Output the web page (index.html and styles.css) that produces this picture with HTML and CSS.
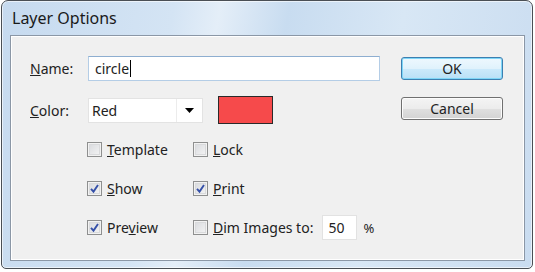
FILE: index.html
```html
<!DOCTYPE html>
<html>
<head>
<meta charset="utf-8">
<link rel="stylesheet" href="styles.css">
</head>
<body>
<div class="window">
  <div class="titlebar">Layer Options</div>
  <div class="panel">
    <div class="form">
      <div class="row row-name">
        <span class="label"><u>N</u>ame:</span>
        <div class="textbox name-box">circle<span class="caret"></span></div>
      </div>
      <div class="row row-color">
        <span class="label"><u>C</u>olor:</span>
        <div class="select">
          <span class="select-text">Red</span>
          <span class="select-arrow"><svg width="9" height="5" viewBox="0 0 9 5"><path d="M0 0H9L4.5 5Z" fill="#000"/></svg></span>
        </div>
        <div class="swatch"></div>
      </div>
      <div class="checks">
        <label class="check"><span class="box"></span><span><u>T</u>emplate</span></label>
        <label class="check"><span class="box"></span><span><u>L</u>ock</span></label>
        <label class="check"><span class="box checked"><svg width="11" height="11" viewBox="0 0 11 11"><path d="M2 5.8L4.5 8.6L9 2" fill="none" stroke="#3550a8" stroke-width="1.9"/></svg></span><span><u>S</u>how</span></label>
        <label class="check"><span class="box checked"><svg width="11" height="11" viewBox="0 0 11 11"><path d="M2 5.8L4.5 8.6L9 2" fill="none" stroke="#3550a8" stroke-width="1.9"/></svg></span><span><u>P</u>rint</span></label>
        <label class="check"><span class="box checked"><svg width="11" height="11" viewBox="0 0 11 11"><path d="M2 5.8L4.5 8.6L9 2" fill="none" stroke="#3550a8" stroke-width="1.9"/></svg></span><span>Pre<u>v</u>iew</span></label>
        <div class="check dim">
          <span class="box"></span><span><u>D</u>im Images to:</span>
          <div class="textbox pct-box">50</div>
          <span class="pct">%</span>
        </div>
      </div>
    </div>
    <div class="buttons">
      <div class="btn btn-default">OK</div>
      <div class="btn">Cancel</div>
    </div>
  </div>
</div>
</body>
</html>
```

FILE: styles.css
```css
html, body {
  margin: 0;
  padding: 0;
  background: #ffffff;
}

body {
  font-family: "Noto Sans", "Open Sans", sans-serif;
  color: #222222;
}

.window {
  width: 532px;
  height: 269px;
  margin-left: 1px;
  border: 1px solid #4a4f55;
  border-radius: 7px 7px 5px 5px;
  background: linear-gradient(100deg, #c6daef 0%, #d4e4f4 30%, #e4eef8 38%, #c8dcf0 50%, #d8e7f5 70%, #c9dcf0 100%);
  display: flex;
  flex-direction: column;
  box-sizing: border-box;
  box-shadow: inset 0 0 0 1px rgba(255,255,255,0.6);
}

.titlebar {
  height: 34px;
  padding-left: 10px;
  display: flex;
  align-items: center;
  font-size: 16px;
  color: #1a1a1a;
  flex-shrink: 0;
}

.panel {
  margin: 0 7px 7px 8px;
  flex: 1;
  border: 1px solid #8b97a6;
  background: #f0f0f0;
  box-shadow: inset 0 0 0 1px #ffffff;
  display: flex;
  justify-content: space-between;
  padding: 20px 21px 0 19px;
}

.form {
  display: flex;
  flex-direction: column;
}

.row {
  display: flex;
  align-items: center;
}

.label {
  width: 58px;
  font-size: 14px;
}

.row-name {
  height: 25px;
}

.textbox {
  background: #ffffff;
  border: 1px solid #abadb3;
  box-sizing: border-box;
  font-size: 14px;
  display: flex;
  align-items: center;
}

.name-box {
  width: 292px;
  height: 25px;
  padding-left: 6px;
  border-color: #b4cde6;
  border-top-color: #8eaed0;
}

.caret {
  display: inline-block;
  width: 1px;
  height: 17px;
  background: #000;
  margin-left: 1px;
}

.row-color {
  height: 28px;
  margin-top: 15px;
}

.select {
  width: 115px;
  height: 25px;
  display: flex;
  background: #ffffff;
  box-sizing: border-box;
  border: 1px solid #e3e3e3;
  font-size: 14px;
}

.select-text {
  flex: 1;
  display: flex;
  align-items: center;
  padding-left: 3px;
  border-right: 1px solid #ececec;
}

.select-arrow {
  width: 25px;
  display: flex;
  align-items: center;
  justify-content: center;
}

.swatch {
  width: 55px;
  height: 28px;
  margin-left: 15px;
  box-sizing: border-box;
  border: 1px solid #2a2a2a;
  background: #f64a4b;
}

.checks {
  margin-top: 13px;
  margin-left: 57px;
  display: grid;
  grid-template-columns: 106px auto;
  grid-auto-rows: 25px;
  row-gap: 14px;
}

.check {
  display: flex;
  align-items: center;
  font-size: 14px;
  white-space: nowrap;
}

.box {
  width: 15px;
  height: 15px;
  box-sizing: border-box;
  border: 1px solid #8e8f8f;
  background: linear-gradient(135deg, #d6d8dc, #f6f6f6);
  box-shadow: inset 0 0 0 1px #f2f2f2, inset 0 0 0 2px #d9dadc;
  margin-right: 5px;
  display: flex;
  align-items: center;
  justify-content: center;
}

.pct-box {
  width: 35px;
  height: 25px;
  margin-left: 9px;
  padding-left: 5px;
  border-color: #e2e2e2;
}

.pct {
  margin-left: 6px;
  font-size: 13px;
}

.buttons {
  display: flex;
  flex-direction: column;
  padding-top: 1px;
  gap: 17px;
}

.btn {
  width: 102px;
  height: 23px;
  box-sizing: border-box;
  border: 1px solid #707070;
  border-radius: 3px;
  background: linear-gradient(#f4f4f4 0%, #ececec 50%, #e0e0e0 51%, #d3d3d3 100%);
  box-shadow: inset 0 0 0 1px #fcfcfc;
  font-size: 14px;
  display: flex;
  align-items: center;
  justify-content: center;
}

.btn-default {
  border-color: #3c7fb1;
  background: linear-gradient(#eef8fe 0%, #e0f2fc 50%, #cceafb 51%, #b9e0f6 100%);
  box-shadow: inset 0 0 0 1px #7fd6f7;
}
```
